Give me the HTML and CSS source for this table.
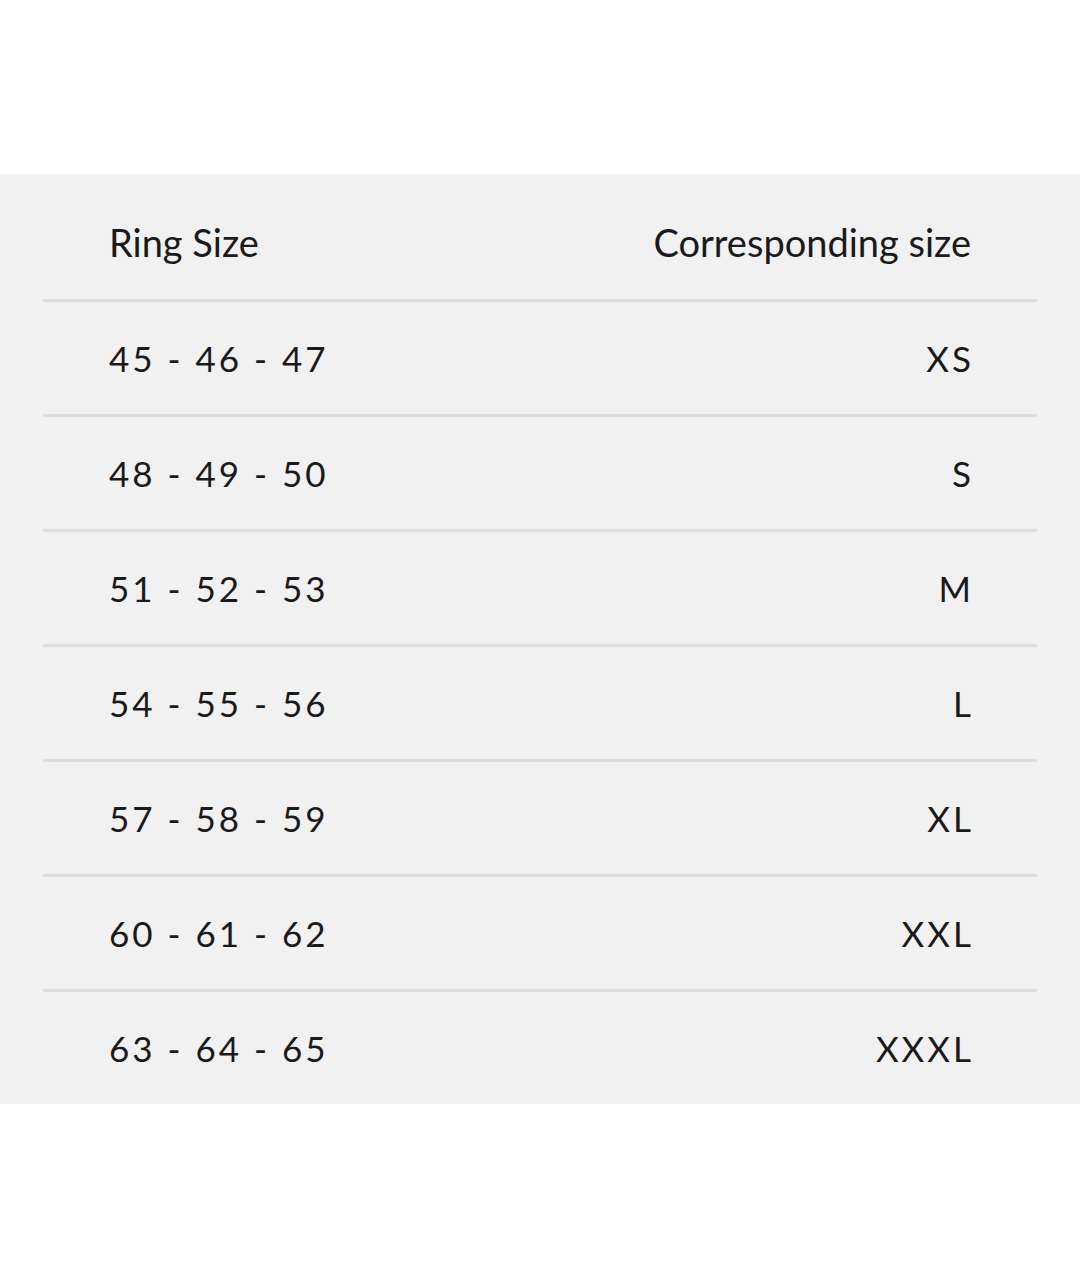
FILE: index.html
```html
<!DOCTYPE html>
<html lang="en">
<head>
<meta charset="utf-8">
<title>Ring Size</title>
<link rel="stylesheet" href="styles.css">
</head>
<body>
<div class="page">
  <section class="panel">
    <div class="table">
      <div class="row head">
        <span>Ring Size</span>
        <span>Corresponding size</span>
      </div>
      <div class="row"><span>45 - 46 - 47</span><span>XS</span></div>
      <div class="row"><span>48 - 49 - 50</span><span>S</span></div>
      <div class="row"><span>51 - 52 - 53</span><span>M</span></div>
      <div class="row"><span>54 - 55 - 56</span><span>L</span></div>
      <div class="row"><span>57 - 58 - 59</span><span>XL</span></div>
      <div class="row"><span>60 - 61 - 62</span><span>XXL</span></div>
      <div class="row"><span>63 - 64 - 65</span><span>XXXL</span></div>
    </div>
  </section>
</div>
</body>
</html>
```
FILE: styles.css
```css
html, body {
  margin: 0;
  padding: 0;
  background: #ffffff;
}
body {
  font-family: "Lato", "Noto Sans", sans-serif;
  color: #1a1a1a;
}
.page {
  padding-top: 174px;
}
.panel {
  background: #f1f1f1;
  padding: 0 43px;
}
.table {
  display: flex;
  flex-direction: column;
}
.row {
  display: flex;
  justify-content: space-between;
  align-items: center;
  height: 112px;
  padding: 0 63px 0 66px;
  border-top: 3px solid #e0dcd8;
  font-size: 35px;
  font-weight: 400;
  letter-spacing: 3px;
}
.row.head {
  border-top: none;
  height: 125px;
  box-sizing: border-box;
  padding: 10px 66px 0 66px;
  font-size: 38px;
  letter-spacing: 0;
}
```
